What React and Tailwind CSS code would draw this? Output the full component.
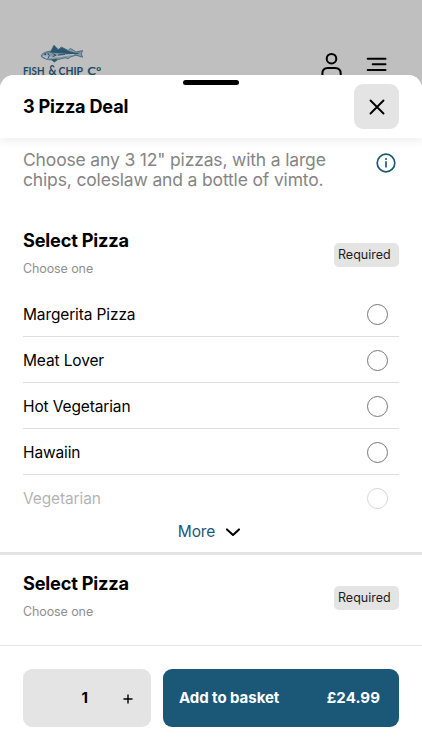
import React, { useState } from 'react';

const PIZZAS = ['Margerita Pizza', 'Meat Lover', 'Hot Vegetarian', 'Hawaiin', 'Vegetarian'];

function Logo() {
    return (
        <svg width="82" height="36" viewBox="0 0 82 36" className="block overflow-visible">
            {/* Fish */}
            <path
                d="M18.3 12.2C20 9.7 24 8.5 28 8.1L31 2.2L35.2 6.6L38.4 4L45 7.4L47.5 5.4L53 9L59.6 7.6L58.3 10.8L59.6 14.2L53 12.2L47.5 13.9L45.5 15.6L42 14.8L35 16.6L31.4 19L28.5 16.9C24.5 16.9 20 15.4 18.3 13.6Z"
                fill="#8798a1"
                stroke="#2a566f"
                strokeWidth="0.7"
                strokeLinejoin="round"
            />
            <path d="M28 8.2L31 2.6L35.2 6.8L39 4.6L45 7.8L53 10L57.5 9.4L54 11.2C44 11 36 10.4 26 9.6Z" fill="#2a566f" />
            <path d="M28.2 16.4L35 15.6L31.4 19Z" fill="#2a566f" />
            <path
                d="M22 14.5C29 13.8 35 14.4 42 12.6L51 11.4M20 13.4L26 12.8L23 15.5"
                fill="none"
                stroke="#b7c3c9"
                strokeWidth="1"
            />
            <path d="M29.5 10.5L33 12.2L29.5 13.8M35 11.9L42 11.2M24.8 9.6L26.2 12.6L25 15.4" fill="none" stroke="#1f4d67" strokeWidth="0.9" />
            <circle cx="22.2" cy="11.2" r="0.9" fill="#1f4d67" />
            <g fill="#1c4b66" fontFamily="Lato, 'Liberation Sans', sans-serif" fontWeight="700" fontSize="11.5">
                <text x="0" y="32.1" textLength="21.5" lengthAdjust="spacingAndGlyphs">FISH</text>
                <text x="25.5" y="32.4" fontSize="12.5" textLength="8" lengthAdjust="spacingAndGlyphs">&amp;</text>
                <text x="35.5" y="32.1" textLength="24.5" lengthAdjust="spacingAndGlyphs">CHIP</text>
                <text x="64.2" y="32.1" textLength="14" lengthAdjust="spacingAndGlyphs">Cº</text>
            </g>
        </svg>
    );
}

function OptionGroupHeader() {
    return (
        <div className="flex items-center justify-between">
            <div>
                <h2 className="text-[18.2px] leading-[24px] font-bold tracking-[-0.2px]">Select Pizza</h2>
                <p className="mt-[9px] text-[12.5px] leading-[16px] tracking-[-0.1px] text-[#909090]">Choose one</p>
            </div>
            <span className="mt-[4px] flex h-6 w-[65px] items-center rounded-[5px] bg-[#e4e4e4] pt-px pl-1 text-[12.5px] text-[#1c1c1c]">
                Required
            </span>
        </div>
    );
}

export default function App() {
    const [quantity, setQuantity] = useState(1);
    const [selected, setSelected] = useState(null);

    return (
        <div className="flex h-[750px] w-[422px] flex-col overflow-hidden bg-[#bfbfbf] font-['Inter','Liberation_Sans',sans-serif] text-black">
            {/* Dimmed site header */}
            <header className="flex h-[75px] shrink-0 items-start justify-between pt-[43px] pr-[35px] pl-[23px]">
                <Logo />
                <div className="flex gap-[24px] pt-[9px]">
                    <svg width="22" height="26" viewBox="0 0 22 26" fill="none" stroke="#000" strokeWidth="2">
                        <circle cx="11.5" cy="6.7" r="4.8" />
                        <path d="M2.4 26V21.5C2.4 18 4.6 15.9 7.8 15.9H15C18.4 15.9 20.7 18 20.7 21.5V26" />
                    </svg>
                    <svg width="21" height="26" viewBox="0 0 21 26" fill="none" stroke="#000" strokeWidth="2" strokeLinecap="round">
                        <path d="M1.7 6.7H19.5M6.7 12.3H19.5M1.7 17.9H19.5" />
                    </svg>
                </div>
            </header>

            {/* Bottom sheet */}
            <main className="flex min-h-0 flex-1 flex-col overflow-hidden rounded-t-[14px] bg-white">
                <div className="relative z-10 flex h-[63px] shrink-0 items-center justify-between bg-white px-[23px] shadow-[0_3px_9px_rgba(0,0,0,0.07)]">
                    <span className="absolute top-[5px] left-[183px] h-[5px] w-[56px] rounded-full bg-black" />
                    <h1 className="mb-px text-[18.1px] leading-[24px] font-bold tracking-[-0.2px]">3 Pizza Deal</h1>
                    <button className="flex size-[45px] items-center justify-center rounded-[9px] bg-[#e4e4e4]">
                        <svg width="16" height="16" viewBox="0 0 16 16" fill="none" stroke="#000" strokeWidth="1.9" strokeLinecap="round">
                            <path d="M1.5 1.5L14.5 14.5M14.5 1.5L1.5 14.5" />
                        </svg>
                    </button>
                </div>

                <div className="min-h-0 flex-1 overflow-hidden">
                    <div className="flex items-start justify-between pt-[12px] pr-[26px] pl-[23px]">
                        <p className="w-[320px] text-[17.5px] leading-[20px] tracking-[-0.16px] text-[#858585]">
                            Choose any 3 12" pizzas, with a large<br />chips, coleslaw and a bottle of vimto.
                        </p>
                        <svg width="20" height="20" viewBox="0 0 20 20" fill="none" stroke="#1b5878" className="mt-[3px]">
                            <circle cx="10" cy="10" r="8.8" strokeWidth="1.7" />
                            <path d="M10 8.3V14.5" strokeWidth="1.7" />
                            <circle cx="10" cy="6" r="1" fill="#1b5878" stroke="none" />
                        </svg>
                    </div>

                    <section className="px-[23px] pt-[38px]">
                        <OptionGroupHeader />
                        <ul className="mt-[14px]">
                            {PIZZAS.map((name, i) => {
                                const last = i === PIZZAS.length - 1;
                                return (
                                    <li
                                        key={name}
                                        onClick={() => setSelected(name)}
                                        className={`flex h-[46px] items-center justify-between pt-px pr-[11px] text-[15.5px] tracking-[-0.13px] ${last ? 'opacity-30' : 'border-b border-[#dedede]'}`}
                                    >
                                        <span className={last ? '' : 'pt-px'}>{name}</span>
                                        <span className={`size-[21px] rounded-full border border-[#777] ${selected === name ? 'bg-[#1b5878]' : ''}`} />
                                    </li>
                                );
                            })}
                        </ul>
                        <button className="mx-auto flex h-[31px] items-start gap-[10px] pr-[3px] text-[15.5px] leading-[20px] tracking-[-0.13px] text-[#1b5878]">
                            <span className="pt-px">More</span>
                            <svg width="16" height="20" viewBox="0 0 16 20" fill="none" stroke="#000" strokeWidth="2" strokeLinecap="round" strokeLinejoin="round">
                                <path d="M2 8.4L8 14L14 8.4" />
                            </svg>
                        </button>
                    </section>

                    <section className="border-t-[3px] border-[#e4e4e4] px-[23px] pt-[16px]">
                        <OptionGroupHeader />
                    </section>
                </div>

                {/* Basket bar */}
                <footer className="flex h-[105px] shrink-0 gap-[12px] border-t border-[#e6e6e6] bg-white px-[23px] pt-[23px]">
                    <div className="flex h-[58px] w-[128px] items-center justify-end rounded-[9px] bg-[#e4e4e4] pr-[18px]">
                        <span className="text-[15px] font-bold">{quantity}</span>
                        <button className="ml-[35px] pt-px" onClick={() => setQuantity(quantity + 1)}>
                            <svg width="10" height="10" viewBox="0 0 10 10" stroke="#000" strokeWidth="1.4">
                                <path d="M5 0.5V9.5M0.5 5H9.5" />
                            </svg>
                        </button>
                    </div>
                    <button className="flex h-[58px] flex-1 items-center justify-between rounded-[9px] bg-[#1b5878] pt-px pr-[19px] pl-[16px] text-[15px] font-bold tracking-[-0.05px] text-white">
                        <span>Add to basket</span>
                        <span className="tracking-[0.1px]">£24.99</span>
                    </button>
                </footer>
            </main>
        </div>
    );
}
